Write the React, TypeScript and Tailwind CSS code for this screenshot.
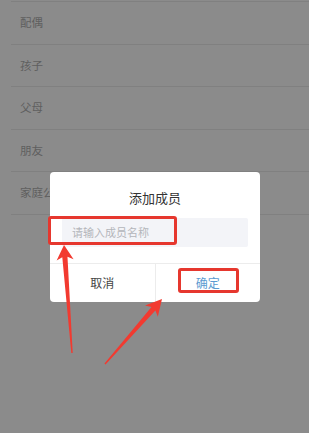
import React from 'react';

// arrow polygon from tail (x1,y1) to tip (x2,y2)
const arrowPoints = (x1: number, y1: number, x2: number, y2: number, headLen = 14, headHalf = 8) => {
    const dx = x2 - x1;
    const dy = y2 - y1;
    const len = Math.sqrt(dx * dx + dy * dy);
    const ux = dx / len;
    const uy = dy / len;
    const px = -uy;
    const py = ux;
    const bx = x2 - ux * headLen;
    const by = y2 - uy * headLen;
    const nx = x2 - ux * (headLen - 3);
    const ny = y2 - uy * (headLen - 3);
    const pts = [
        [x2, y2],
        [bx + px * headHalf, by + py * headHalf],
        [nx + px * 2.6, ny + py * 2.6],
        [x1 + px * 0.7, y1 + py * 0.7],
        [x1 - px * 0.7, y1 - py * 0.7],
        [nx - px * 2.6, ny - py * 2.6],
        [bx - px * headHalf, by - py * headHalf],
    ];
    return pts.map((p) => p.join(',')).join(' ');
};

const rows = ["配偶", "孩子", "父母", "朋友", "家庭公共"];

const App = () => {
    return (
        <div
            className="relative w-[309px] h-[433px] overflow-hidden bg-[#8b8b8b]"
            style={{ fontFamily: '"Noto Sans CJK SC", "Noto Sans", sans-serif' }}
        >
            {/* member list behind the mask */}
            <div className="pt-px">
                <div className="ml-[11px] border-t border-[#808080]" />
                {rows.map((name) => (
                    <div
                        key={name}
                        className="ml-[11px] h-[42.5px] border-b border-[#808080] flex items-center pl-[9px] text-[11.5px] text-[#5f5f5f]"
                    >
                        {name}
                    </div>
                ))}
            </div>

            {/* dialog */}
            <div className="absolute left-[50px] top-[172px] w-[210px] h-[130px] bg-white rounded-[4px] flex flex-col">
                <div className="h-[46px] pt-[17px] text-center text-[13px] leading-[18px] text-[#333333]">
                    添加成员
                </div>
                <div className="mx-[12px] h-[29px] bg-[#f3f4f8] rounded-[2px] flex items-center pl-[10px] text-[11px] text-[#b4b6bb]">
                    请输入成员名称
                </div>
                <div className="mt-auto h-[39px] border-t border-[#ececec] flex">
                    <div className="flex-1 flex items-center justify-center text-[12px] text-[#444444] border-r border-[#ececec]">
                        取消
                    </div>
                    <div className="flex-1 flex items-center justify-center text-[12px] text-[#5b9bd1]">
                        确定
                    </div>
                </div>

                {/* red annotation boxes */}
                <div className="absolute left-[-2px] top-[44px] w-[129px] h-[29px] border-[3px] border-[#e6372e] rounded-[3px]" />
                <div className="absolute left-[128px] top-[96px] w-[61px] h-[25px] border-[3px] border-[#e6372e] rounded-[3px]" />
            </div>

            {/* red annotation arrows */}
            <svg className="absolute inset-0" width="309" height="433" viewBox="0 0 309 433">
                <polygon points={arrowPoints(72, 353, 64, 245, 15, 8.5)} fill="#f23a30" />
                <polygon points={arrowPoints(105, 364, 162, 299, 16, 8.5)} fill="#f23a30" />
            </svg>
        </div>
    );
};

export default App;
